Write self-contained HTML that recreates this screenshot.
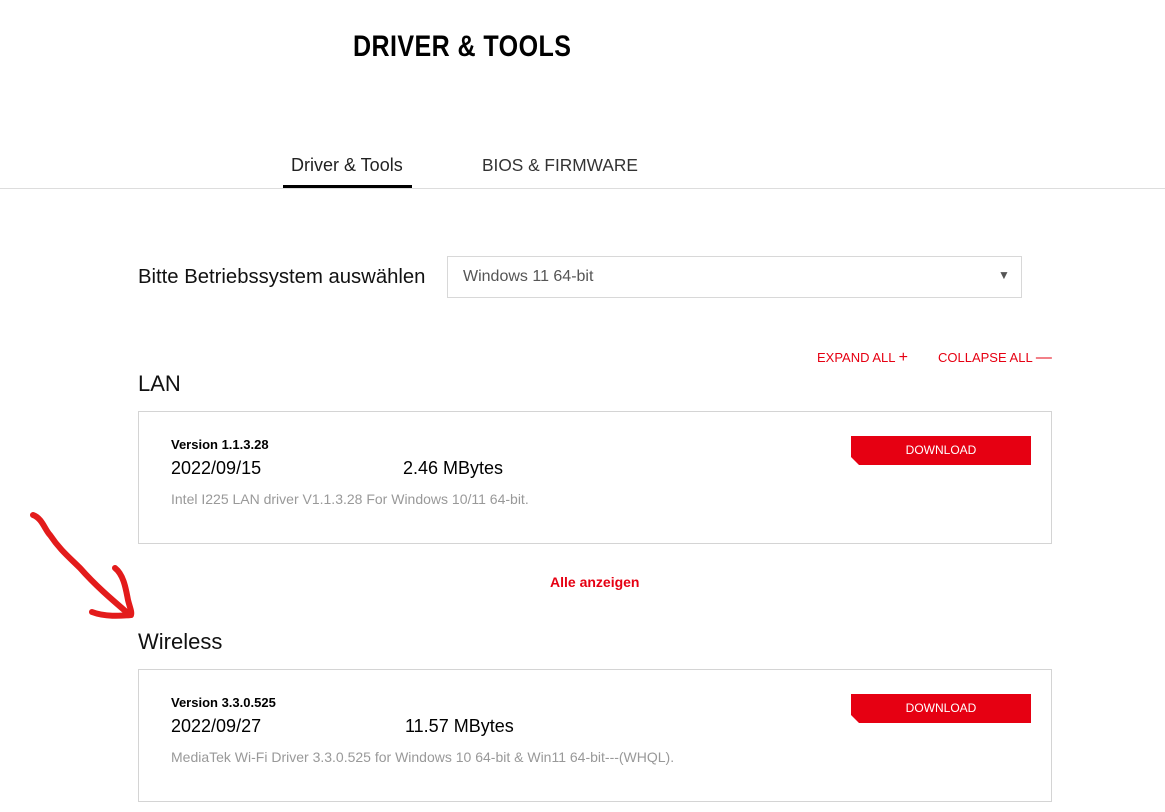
<!DOCTYPE html>
<html><head><style>
body{margin:0;width:1165px;height:812px;background:#fff;font-family:"Liberation Sans",sans-serif;position:relative;overflow:hidden;color:#000}
.a{position:absolute;white-space:nowrap}
.box{position:absolute;left:138px;width:912px;border:1px solid #d4d4d4;background:#fff}
.dl{position:absolute;left:851px;width:180px;height:29px;background:#e60012;color:#fff;font-size:12px;text-align:center;line-height:29px;clip-path:polygon(0 0,100% 0,100% 100%,8px 100%,0 calc(100% - 8px))}
</style></head><body>
<div class="a" style="left:353px;top:30px;font-size:30px;font-weight:bold;letter-spacing:0.5px;transform:scaleX(0.835);transform-origin:left">DRIVER &amp; TOOLS</div>
<div class="a" style="left:291px;top:155px;font-size:18px;color:#222">Driver &amp; Tools</div>
<div class="a" style="left:283px;top:185px;width:129px;height:3px;background:#000"></div>
<div class="a" style="left:482px;top:155px;font-size:17.3px;color:#333">BIOS &amp; FIRMWARE</div>
<div class="a" style="left:0;top:188px;width:1165px;height:1px;background:#ddd"></div>
<div class="a" style="left:138px;top:266px;font-size:20.3px;color:#111">Bitte Betriebssystem auswählen</div>
<div class="a" style="left:447px;top:256px;width:573px;height:40px;border:1px solid #d8d8d8"></div>
<div class="a" style="left:463px;top:268px;font-size:16px;color:#555">Windows 11 64-bit</div>
<div class="a" style="left:998px;top:268px;font-size:12px;color:#555">▼</div>
<div class="a" style="left:817px;top:349px;font-size:13px;color:#e60012">EXPAND ALL <span style="font-size:16px">+</span></div>
<div class="a" style="left:938px;top:349px;font-size:13px;color:#e60012">COLLAPSE ALL <span style="font-size:16px">—</span></div>
<div class="a" style="left:138px;top:371px;font-size:22px;color:#111">LAN</div>
<div class="box" style="top:411px;height:131px"></div>
<div class="a" style="left:171px;top:437px;font-size:13px;font-weight:bold">Version 1.1.3.28</div>
<div class="a" style="left:171px;top:458px;font-size:18px">2022/09/15</div>
<div class="a" style="left:403px;top:458px;font-size:18px">2.46 MBytes</div>
<div class="a" style="left:171px;top:491px;font-size:14px;color:#999">Intel I225 LAN driver V1.1.3.28 For Windows 10/11 64-bit.</div>
<div class="dl" style="top:436px">DOWNLOAD</div>
<div class="a" style="left:550px;top:574px;font-size:14px;font-weight:bold;color:#e60012">Alle anzeigen</div>
<div class="a" style="left:138px;top:629px;font-size:22px;color:#111">Wireless</div>
<div class="box" style="top:669px;height:131px"></div>
<div class="a" style="left:171px;top:695px;font-size:13px;font-weight:bold">Version 3.3.0.525</div>
<div class="a" style="left:171px;top:716px;font-size:18px">2022/09/27</div>
<div class="a" style="left:405px;top:716px;font-size:18px">11.57 MBytes</div>
<div class="a" style="left:171px;top:749px;font-size:14px;color:#999">MediaTek Wi-Fi Driver 3.3.0.525 for Windows 10 64-bit &amp; Win11 64-bit---(WHQL).</div>
<div class="dl" style="top:694px">DOWNLOAD</div>
<svg class="a" style="left:0;top:0" width="200" height="700"><g fill="none" stroke="#e31b1b" stroke-width="6" stroke-linecap="round" stroke-linejoin="round">
<path d="M33 515 C42 518 45 530 50 535 C60 550 70 558 80 568 C95 585 110 598 130 615"/>
<path d="M115 568 C124 575 126 590 128 600 C130 608 132 612 131 615 C120 616 105 617 92 612"/>
</g></svg>
</body></html>
